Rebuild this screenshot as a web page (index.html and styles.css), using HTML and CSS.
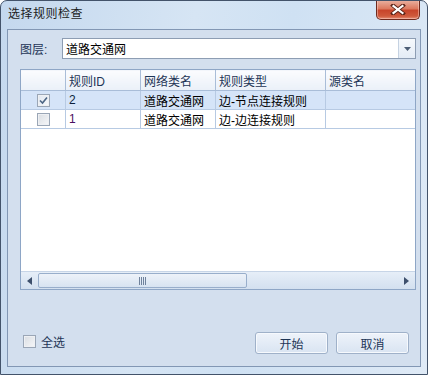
FILE: index.html
```html
<!DOCTYPE html>
<html lang="zh">
<head>
<meta charset="utf-8">
<title>选择规则检查</title>
<link rel="stylesheet" href="styles.css">
</head>
<body>
<div class="window">
  <div class="titlebar">
    <span class="title">选择规则检查</span>
    <div class="close">
      <svg width="16" height="11" viewBox="0 0 16 11"><path d="M3 1.5 L13 9.5 M13 1.5 L3 9.5" stroke="#5a2418" stroke-width="4" stroke-linecap="square"/><path d="M3.5 2 L12.5 9 M12.5 2 L3.5 9" stroke="#ffffff" stroke-width="2.2" stroke-linecap="square"/></svg>
    </div>
  </div>
  <div class="client">
    <div class="layer-row">
      <span class="label">图层:</span>
      <div class="combo">
        <span class="combo-text">道路交通网</span>
        <span class="combo-btn"><svg width="7" height="4" viewBox="0 0 7 4"><path d="M0 0 H7 L3.5 4 Z" fill="#4c5d74"/></svg></span>
      </div>
    </div>
    <div class="grid">
      <div class="grid-body">
        <table class="rules">
          <colgroup>
            <col class="c-chk"><col class="c-id"><col class="c-net"><col class="c-type"><col class="c-src"><col class="c-more">
          </colgroup>
          <thead>
            <tr><th></th><th>规则ID</th><th>网络类名</th><th>规则类型</th><th>源类名</th><th></th></tr>
          </thead>
          <tbody>
            <tr class="sel">
              <td class="chk-cell"><span class="cb checked"><svg width="9" height="9" viewBox="0 0 9 9"><path d="M1 4.5 L3.5 7 L8 1.5" stroke="#4d6685" stroke-width="1.6" fill="none"/></svg></span></td>
              <td class="num">2</td><td>道路交通网</td><td>边-节点连接规则</td><td></td><td></td>
            </tr>
            <tr>
              <td class="chk-cell"><span class="cb"></span></td>
              <td class="num purple">1</td><td>道路交通网</td><td>边-边连接规则</td><td></td><td></td>
            </tr>
          </tbody>
        </table>
      </div>
      <div class="hscroll">
        <span class="arrow"><svg width="5" height="8" viewBox="0 0 5 8"><path d="M5 0 V8 L0 4 Z" fill="#3d4f6c"/></svg></span>
        <div class="track">
          <div class="thumb"><span class="grip"></span></div>
        </div>
        <span class="arrow"><svg width="5" height="8" viewBox="0 0 5 8"><path d="M0 0 V8 L5 4 Z" fill="#3d4f6c"/></svg></span>
      </div>
    </div>
    <div class="bottom-row">
      <label class="select-all"><span class="cb"></span><span>全选</span></label>
      <div class="buttons">
        <button class="btn">开始</button>
        <button class="btn">取消</button>
      </div>
    </div>
  </div>
</div>
</body>
</html>
```
FILE: styles.css
```css
html, body {
  margin: 0;
  padding: 0;
  background: #ffffff;
}
body {
  width: 428px;
  height: 375px;
  font-family: "Liberation Sans", "Noto Sans CJK SC", sans-serif;
  font-size: 12px;
}
.window {
  box-sizing: border-box;
  width: 428px;
  height: 375px;
  border: 1px solid #43536a;
  border-radius: 7px 7px 0 0;
  background: linear-gradient(100deg, #c4d8ee 0%, #d6e5f4 40%, #cfe1f3 60%, #dfeaf6 100%);
  display: flex;
  flex-direction: column;
  overflow: hidden;
}
.titlebar {
  height: 28px;
  flex: none;
  display: flex;
  justify-content: space-between;
  align-items: flex-start;
}
.title {
  margin: 5px 0 0 7px;
  color: #1d1d1d;
  font-size: 12px;
  line-height: 16px;
  letter-spacing: 0.5px;
}
.close {
  box-sizing: border-box;
  width: 44px;
  height: 20px;
  margin: -1px 7px 0 0;
  border: 1px solid #6e2a1e;
  border-top: none;
  border-radius: 0 0 5px 5px;
  background: linear-gradient(#eab3a3 0%, #dc7a60 45%, #c8452b 55%, #cf5a3c 85%, #e69078 100%);
  box-shadow: inset 0 0 0 1px rgba(255,220,210,0.45);
  display: flex;
  align-items: center;
  justify-content: center;
}
.client {
  flex: 1;
  margin: 0 6px 7px 6px;
  border: 1px solid #8297b4;
  background: #d3dfee;
  display: flex;
  flex-direction: column;
  padding: 8px 3px 0 12px;
}
.layer-row {
  display: flex;
  align-items: center;
  height: 21px;
  margin-right: 1px;
}
.label {
  width: 42px;
  color: #1e3556;
}
.combo {
  flex: 1;
  box-sizing: border-box;
  height: 21px;
  border: 1px solid #8d9db3;
  background: #ffffff;
  display: flex;
  align-items: center;
}
.combo-text {
  flex: 1;
  padding-left: 3px;
  color: #000000;
}
.combo-btn {
  width: 16px;
  height: 19px;
  border-left: 1px solid #c5d2e2;
  background: linear-gradient(#f6f9fc, #e4ecf6);
  display: flex;
  align-items: center;
  justify-content: center;
}
.grid {
  margin-top: 10px;
  margin-right: 1px;
  box-sizing: border-box;
  height: 221px;
  border: 1px solid #8ea6c6;
  display: flex;
  flex-direction: column;
  overflow: hidden;
}
.grid-body {
  flex: 1;
  background: #ffffff;
  overflow: hidden;
}
.rules {
  border-collapse: collapse;
  table-layout: fixed;
  width: 520px;
  margin: -1px 0 0 -1px;
}
.c-chk { width: 45px; }
.c-id { width: 75px; }
.c-net { width: 75px; }
.c-type { width: 110px; }
.c-src { width: 90px; }
.c-more { width: 125px; }
.rules th {
  height: 20px;
  padding: 0 3px;
  text-align: left;
  font-weight: normal;
  color: #1e3556;
  background: linear-gradient(#fbfcfe, #eaf0f8);
  border: 1px solid #a9bdd8;
  white-space: nowrap;
  overflow: hidden;
}
.rules td {
  height: 18px;
  padding: 0 3px;
  color: #000000;
  border: 1px solid #b7cae3;
  white-space: nowrap;
  overflow: hidden;
}
.rules tr.sel td {
  background: #d5e4f8;
}
.rules td.num {
  color: #0c1f3c;
}
.rules td.purple {
  color: #4a1060;
}
.chk-cell {
  text-align: center;
}
.cb {
  box-sizing: border-box;
  display: inline-flex;
  align-items: center;
  justify-content: center;
  width: 13px;
  height: 13px;
  border: 1px solid #9aa6b6;
  background: linear-gradient(135deg, #d9dde2, #f6f7f9);
  box-shadow: inset 0 0 0 1px #eef0f3;
  vertical-align: middle;
}
.cb.checked {
  background: linear-gradient(135deg, #dfe6ef, #f8fafc);
}
.hscroll {
  flex: none;
  height: 17px;
  display: flex;
  align-items: stretch;
  background: linear-gradient(#e6eef8, #d3e0ef);
  border-top: 1px solid #c7d5e7;
}
.arrow {
  width: 17px;
  display: flex;
  align-items: center;
  justify-content: center;
}
.track {
  flex: 1;
  display: flex;
  align-items: center;
}
.thumb {
  box-sizing: border-box;
  width: 209px;
  height: 15px;
  border: 1px solid #98aecb;
  border-radius: 2px;
  background: linear-gradient(#edf2f9, #d7e3f1);
  display: flex;
  align-items: center;
  justify-content: center;
}
.grip {
  width: 7px;
  height: 8px;
  background: repeating-linear-gradient(90deg, #6f829c 0 1px, transparent 1px 2px);
}
.bottom-row {
  display: flex;
  align-items: center;
  justify-content: space-between;
  margin-top: 42px;
  margin-right: 8px;
  height: 22px;
}
.select-all {
  display: flex;
  align-items: center;
  gap: 5px;
  margin: -4px 0 0 3px;
  color: #1e3556;
}
.buttons {
  display: flex;
  gap: 8px;
}
.btn {
  box-sizing: border-box;
  width: 73px;
  height: 22px;
  margin: 0;
  padding: 0;
  border: 1px solid #9fb1c9;
  border-radius: 3px;
  background: linear-gradient(#eef3fa, #d9e4f2);
  box-shadow: inset 0 0 0 1px #f6f9fd;
  font-family: "Liberation Sans", "Noto Sans CJK SC", sans-serif;
  font-size: 12px;
  color: #1e3556;
}
```
